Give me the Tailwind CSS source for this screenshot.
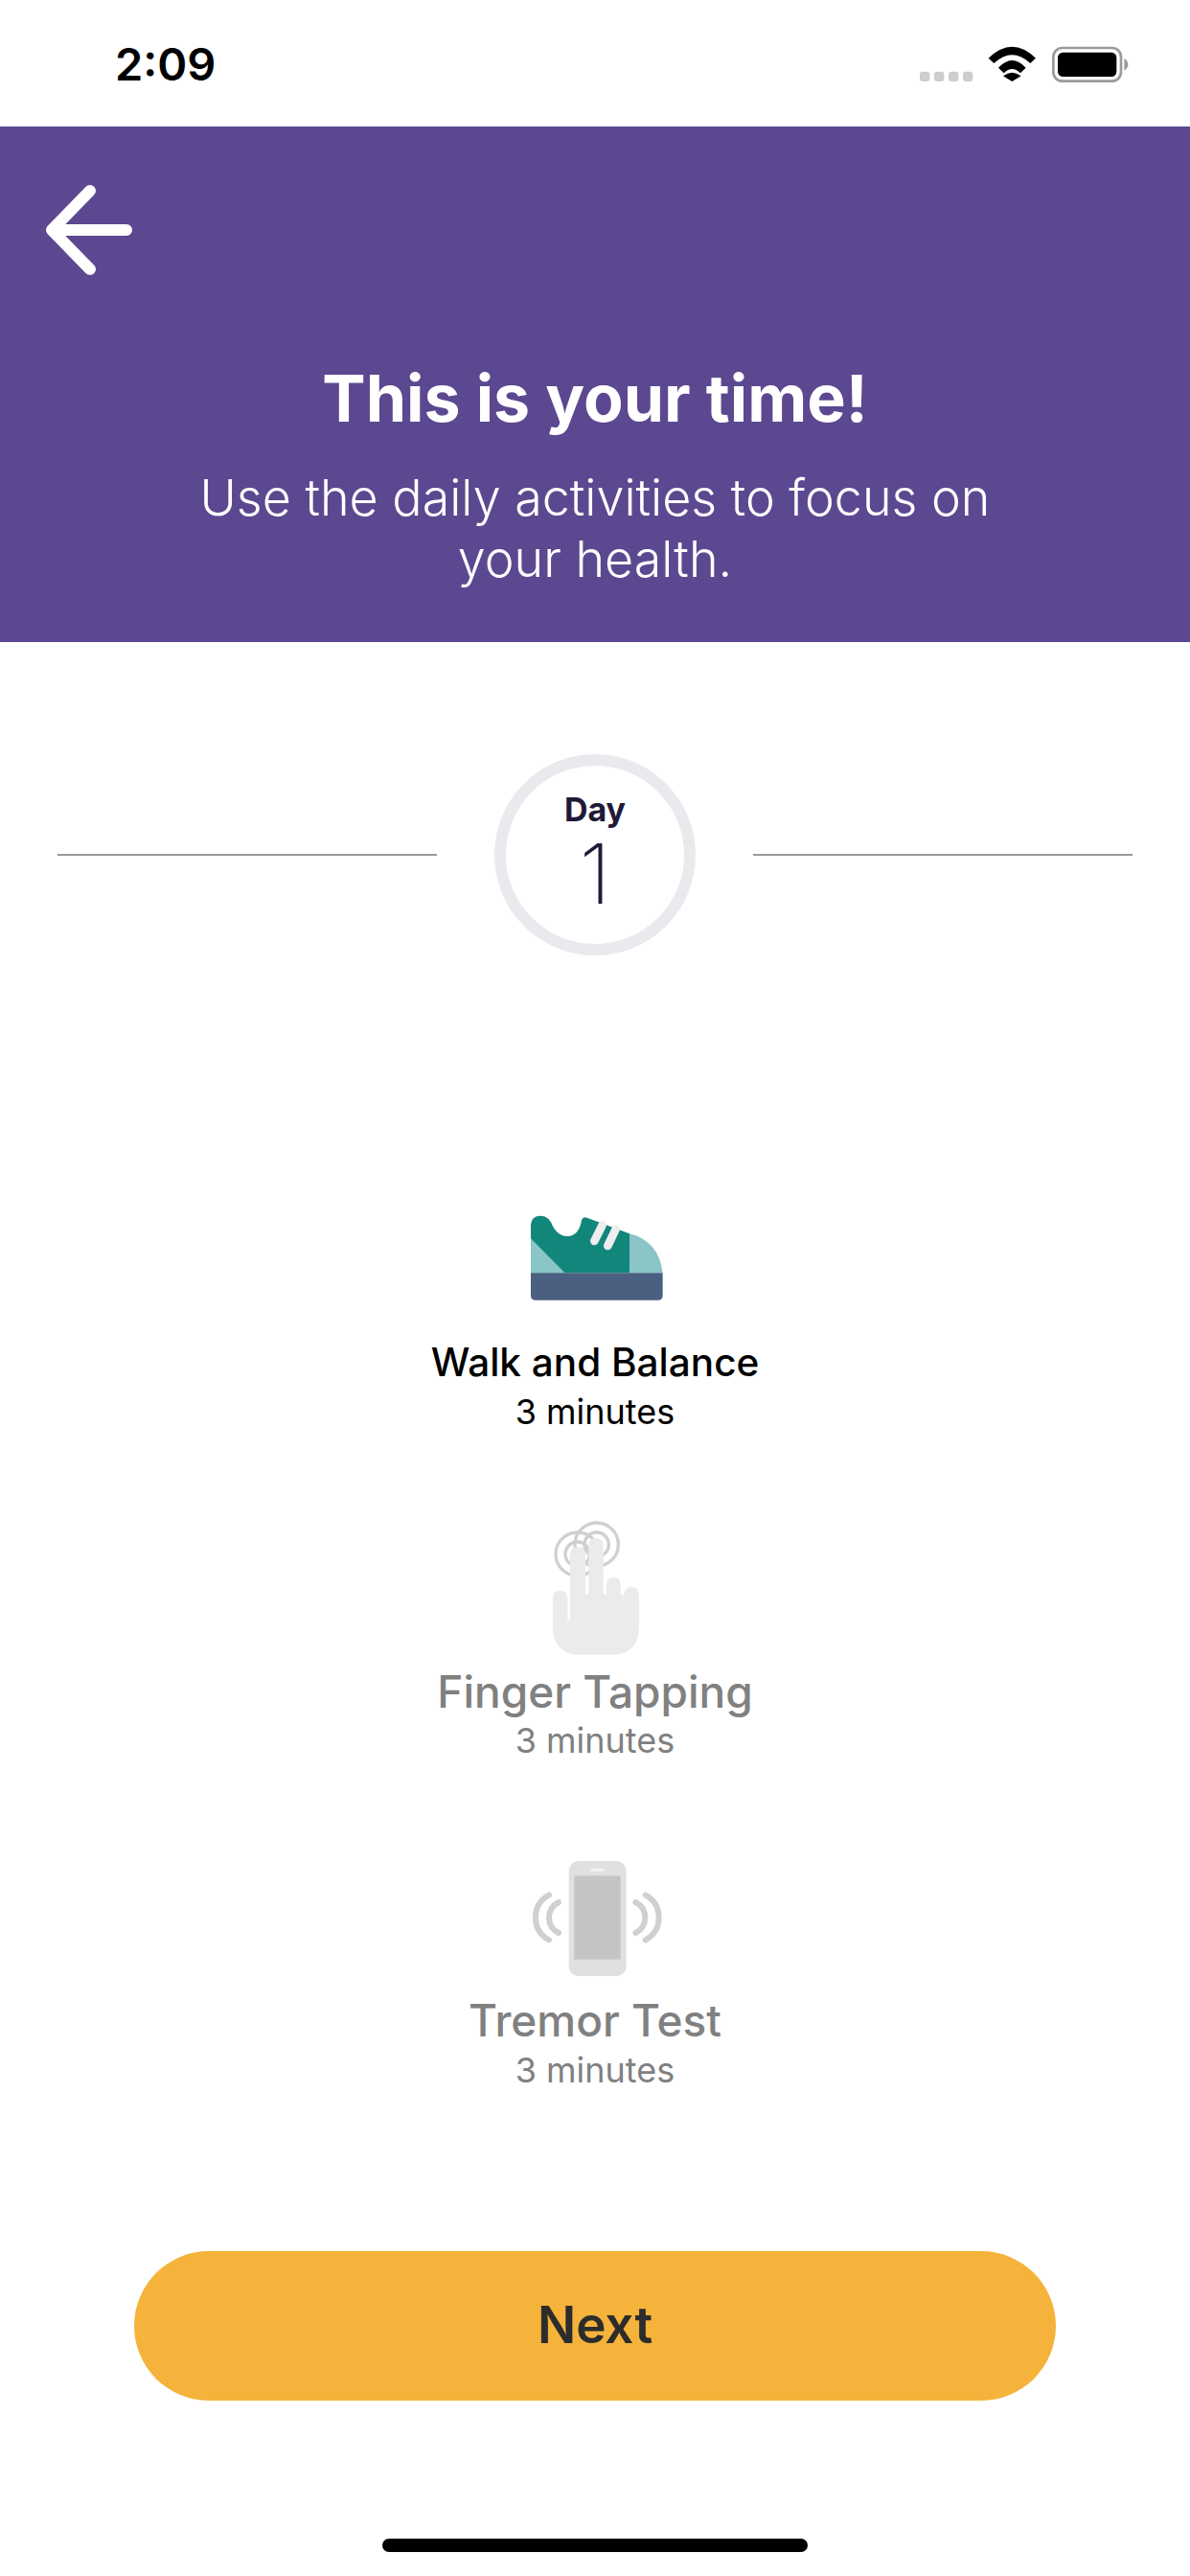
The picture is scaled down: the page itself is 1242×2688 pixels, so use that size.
<!DOCTYPE html>
<html lang="en">
<head>
    <meta charset="UTF-8">
    <meta name="viewport" content="width=device-width, initial-scale=1.0">
    <title>Daily Activities</title>
    <script src="https://cdn.jsdelivr.net/npm/@tailwindcss/browser@4"></script>
</head>
<body class="bg-white font-['Inter',sans-serif]">
    <div class="w-[1242px] h-[2688px] overflow-hidden flex flex-col items-center bg-white">
        <!-- status bar -->
        <div class="w-full h-[132px] flex justify-between pl-[120px] pr-[52px]">
            <span class="mt-[38px] text-[47px] leading-[58px] font-semibold text-black">2:09</span>
            <svg class="mt-[30px]" width="260" height="70" viewBox="0 0 780 210">
                <rect x="90" y="134" width="31" height="31" rx="9" fill="#cdcdcd"/>
                <rect x="135" y="134" width="31" height="31" rx="9" fill="#cdcdcd"/>
                <rect x="180" y="134" width="31" height="31" rx="9" fill="#cdcdcd"/>
                <rect x="225" y="134" width="31" height="31" rx="9" fill="#cdcdcd"/>
                <path d="M305 92 Q379 20 453 92 L436 108 Q379 55 322 108 Z" fill="#000"/>
                <path d="M336 122 Q379 76 422 122 L405 139 Q379 113 353 139 Z" fill="#000"/>
                <path d="M379 165 L351 148 Q379 126 407 148 Z" fill="#000"/>
                <rect x="508" y="60" width="212" height="104" rx="28" fill="none" stroke="#9a9a9a" stroke-width="8"/>
                <rect x="522" y="74" width="184" height="76" rx="16" fill="#000"/>
                <path d="M730 93 Q742 100 742 112 Q742 124 730 131 Z" fill="#9a9a9a"/>
            </svg>
        </div>

        <!-- header -->
        <div class="w-full h-[538px] bg-[#5c4890] flex flex-col items-center relative">
            <svg class="self-start ml-[40px] mt-[58px]" width="104" height="104" viewBox="0 0 104 104" fill="none" stroke="#fff" stroke-width="12" stroke-linecap="round" stroke-linejoin="round">
                <path d="M92 50 H14 M54 9 L14 50 L54 91"/>
            </svg>
            <h1 class="mt-[81px] text-[68px] leading-[80px] font-bold text-white">This is your time!</h1>
            <p class="mt-[33px] w-[900px] text-center text-[52px] leading-[64px] font-light text-white">Use the daily activities to focus on<br>your health.</p>
        </div>

        <!-- day -->
        <div class="w-full mt-[117px] px-[60px] flex items-center gap-[60px]">
            <div class="flex-1 h-[2px] bg-[#9a9a9a]"></div>
            <div class="w-[210px] h-[210px] rounded-full border-[12px] border-[#e9eaee] flex flex-col items-center text-[#1f1a38]">
                <span class="mt-[25px] text-[34px] leading-[42px] font-bold">Day</span>
                <span class="mt-[4px] text-[86px] leading-[84px] font-extralight">1</span>
            </div>
            <div class="flex-1 h-[2px] bg-[#9a9a9a]"></div>
        </div>

        <!-- activities -->
        <div class="mt-[243px] flex flex-col items-center">
            <svg width="200" height="120" viewBox="0 0 600 360">
                <path d="M99 265 V120 Q99 86 130 86 Q150 86 162 106 Q180 150 212 150 Q250 150 258 100 Q262 88 275 92 L408 142 V265 Z" fill="#12867a"/>
                <path d="M99 157 L206 265 H99 Z" fill="#8ac5c7"/>
                <path d="M408 142 Q500 165 512 265 H408 Z" fill="#8ac5c7"/>
                <path d="M99 265 H512 V335 Q512 350 497 350 H114 Q99 350 99 335 Z" fill="#4b5f81"/>
                <path d="M323 115 L298 165 M365 128 L340 180" stroke="#eeeeee" stroke-width="26" stroke-linecap="round"/>
            </svg>
            <p class="mt-[34px] text-[40.5px] leading-[56px] font-medium text-black">Walk and Balance</p>
            <p class="mt-[1px] text-[36px] leading-[44px] text-black">3 minutes</p>

            <svg class="mt-[75px]" width="160" height="160" viewBox="0 0 480 480">
                <g fill="none" stroke="#d0d0d0" stroke-width="10">
                    <circle cx="185" cy="155" r="68"/>
                    <circle cx="185" cy="155" r="38"/>
                    <circle cx="245" cy="125" r="68"/>
                    <circle cx="245" cy="125" r="38"/>
                </g>
                <path d="M108 295 Q108 270 131 270 Q154 270 154 295 V360 H162 V158 Q162 133 186 133 Q210 133 210 158 V280 H220 V130 Q220 105 243 105 Q266 105 266 130 V280 H276 V250 Q276 228 298 228 Q320 228 320 250 V284 H330 Q335 257 354 257 Q378 257 378 285 V380 Q378 470 290 470 H195 Q108 470 108 380 Z" fill="#ebebeb"/>
            </svg>
            <p class="mt-[7px] text-[46px] leading-[56px] font-medium text-[#808080]">Finger Tapping</p>
            <p class="mt-[1px] text-[36px] leading-[44px] text-[#808080]">3 minutes</p>

            <svg class="mt-[82px]" width="180" height="160" viewBox="0 0 540 480">
                <rect x="188" y="66" width="180" height="360" rx="30" fill="#e0e0e0"/>
                <rect x="205" y="112" width="145" height="262" fill="#c4c4c4"/>
                <rect x="256" y="89" width="44" height="9" rx="4" fill="#f4f4f4"/>
                <g fill="none" stroke="#d0d0d0" stroke-width="18" stroke-linecap="round">
                    <path d="M126 172 Q84 195 84 243 Q84 290 126 313"/>
                    <path d="M156 195 Q126 210 126 243 Q126 276 156 291"/>
                    <path d="M428 172 Q470 195 470 243 Q470 290 428 313"/>
                    <path d="M397 195 Q427 210 427 243 Q427 276 397 291"/>
                </g>
            </svg>
            <p class="text-[46px] leading-[56px] font-medium text-[#808080]">Tremor Test</p>
            <p class="mt-[2px] text-[36px] leading-[44px] text-[#808080]">3 minutes</p>
        </div>

        <button class="mt-[167px] w-[962px] h-[156px] shrink-0 rounded-full bg-[#f5b33b] text-[53px] font-semibold text-[#2c2c2c]">Next</button>

        <div class="mt-[144px] w-[444px] h-[14px] shrink-0 rounded-full bg-black"></div>
    </div>
</body>
</html>
